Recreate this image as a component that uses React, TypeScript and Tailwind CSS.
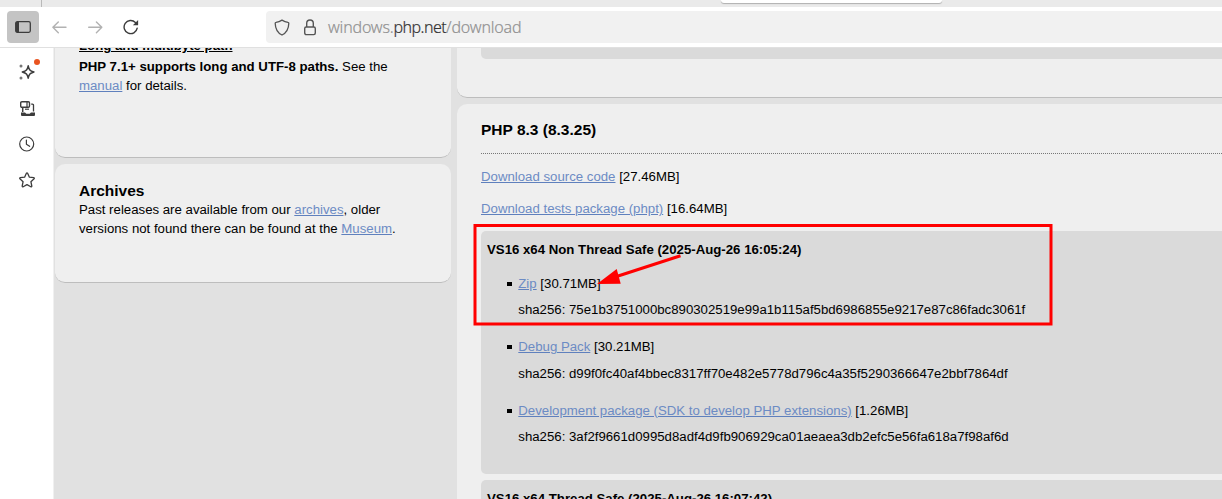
import React from "react";

function Link({ children }: { children: React.ReactNode }) {
  return (
    <a className="text-[#6c8bc4] underline decoration-[#5f80bd]">
      {children}
    </a>
  );
}

const packages = [
  {
    name: "Zip",
    size: "[30.71MB]",
    sha: "75e1b3751000bc890302519e99a1b115af5bd6986855e9217e87c86fadc3061f",
    row: "h-[63px]",
    hash: "mt-[6px]",
  },
  {
    name: "Debug Pack",
    size: "[30.21MB]",
    sha: "d99f0fc40af4bbec8317ff70e482e5778d796c4a35f5290366647e2bbf7864df",
    row: "h-[64px]",
    hash: "mt-[7px]",
  },
  {
    name: "Development package (SDK to develop PHP extensions)",
    size: "[1.26MB]",
    sha: "3af2f9661d0995d8adf4d9fb906929ca01aeaea3db2efc5e56fa618a7f98af6d",
    row: "h-[46px]",
    hash: "mt-[6px]",
  },
];

function TabStrip() {
  return (
    <div className="flex h-[7px] shrink-0 bg-[#eaeaea]">
      <div className="w-[42px] shrink-0 border-r border-[#b9b9b9]" />
      <div className="ml-[679px] h-[3px] w-[221px] rounded-b-[4px] bg-white shadow-[0_1px_1px_#b0b0b0]" />
    </div>
  );
}

function Toolbar() {
  return (
    <div className="flex h-[41px] shrink-0 border-b border-[#e0e0e0] bg-white pt-1 pl-[7px]">
      <div className="flex h-8 w-8 items-center justify-center rounded-[4px] bg-[#c4c4c4]">
        <svg width="16" height="12" viewBox="0 0 16 12" fill="none">
          <rect x="0.7" y="0.7" width="14.600" height="10.600" rx="1.500" stroke="#3c3c3c" strokeWidth="1.300" />
          <path d="M1 1h3v10H1z" fill="#3c3c3c" />
        </svg>
      </div>
      <svg className="mt-[9px] ml-[13px]" width="15" height="15" viewBox="0 0 15 15" fill="none" stroke="#b2b2b2" strokeWidth="1.4" strokeLinecap="round" strokeLinejoin="round">
        <path d="M14 7.3H1M6.3 1.9L.9 7.3l5.4 5.4" />
      </svg>
      <svg className="mt-[9px] ml-[21px]" width="15" height="15" viewBox="0 0 15 15" fill="none" stroke="#b2b2b2" strokeWidth="1.4" strokeLinecap="round" strokeLinejoin="round">
        <path d="M.7 7.3h13M8.4 1.9l5.4 5.4-5.4 5.4" />
      </svg>
      <svg className="mt-2 ml-[20px]" width="17" height="16" viewBox="0 0 17 16" fill="none">
        <path d="M14.2 9.2A6.600 6.600 0 1 1 12.400 3.400L13 4.200" stroke="#3c3c3c" strokeWidth="1.400" strokeLinecap="round" />
        <path d="M15.100 1v4.700a.5.5 0 0 1-.5.5H9.900z" fill="#3c3c3c" />
      </svg>
      <div className="ml-[126px] flex h-8 flex-1 items-center rounded-l-[4px] bg-[#f1f1f1] pl-2">
        <svg width="16" height="17" viewBox="0 0 16 17" fill="none" stroke="#555" strokeWidth="1.3" strokeLinejoin="round">
          <path d="M8 1.1c1.8 1.2 3.7 2 6 2.2.5 0 .8.4.8.9-.1 5.1-1.9 9.4-6.8 11.8C3.100 13.600 1.300 9.300 1.200 4.200c0-.5.300-.900.800-.900 2.300-.200 4.200-1 6-2.200z" />
        </svg>
        <svg className="ml-[14px]" width="12" height="17" viewBox="0 0 12 17" fill="none" stroke="#555" strokeWidth="1.4">
          <rect x=".7" y="8" width="10.6" height="7.6" rx="1.5" />
          <path d="M2.700 8V4.300a3.300 3.300 0 0 1 6.600 0V8" />
        </svg>
        <span className="-mt-px ml-3 font-['Noto_Sans','Open_Sans',sans-serif] text-[16px] font-light tracking-[-0.18px] whitespace-nowrap text-[#929292] [-webkit-text-stroke:0.2px]">
          windows.<span className="tracking-[-0.55px] text-[#333]">php.net</span>/download
        </span>
      </div>
    </div>
  );
}

function Sidebar() {
  return (
    <div className="flex w-[54px] shrink-0 flex-col border-r border-[#f0f0f0] bg-white">
      <div className="relative mt-4 ml-[19px] h-4 w-4">
        <svg width="16" height="16" viewBox="0 0 16 16" fill="none">
          <path d="M9.200 1.800c.900 4.100 1.700 4.900 5.700 6.200-4 1.300-4.800 2.100-5.700 6.200-.9-4.100-1.700-4.900-5.900-6.200 4.200-1.300 5-2.100 5.900-6.200z" stroke="#3c3c3c" strokeWidth="1.500" strokeLinejoin="round" />
          <circle cx="2" cy="2" r="1.500" fill="#777" />
          <circle cx="2" cy="14" r="1.500" fill="#777" />
        </svg>
        <div className="absolute -top-[5px] left-[15px] h-[6px] w-[6px] rounded-full bg-[#e95420]" />
      </div>
      <svg className="mt-[21px] ml-[20px]" width="16" height="15" viewBox="0 0 16 15" fill="none" stroke="#3c3c3c">
        <rect x=".700" y=".700" width="8.800" height="5.600" rx="1.200" strokeWidth="1.400" />
        <path d="M7 1v5" strokeWidth="1.200" />
        <path d="M11.200 3.200h1.300a1 1 0 0 1 1 1V10.500" strokeWidth="1.300" />
        <path d="M2.700 7v4" strokeWidth="1.500" />
        <path d="M5 8.200h4" strokeWidth="1.200" />
        <path d="M1 11.500h4l1.300 1.300h3.400L11 11.500h4V14a1 1 0 0 1-1 1H2a1 1 0 0 1-1-1z" fill="#3c3c3c" stroke="none" />
      </svg>
      <svg className="mt-[20px] ml-[19px]" width="16" height="16" viewBox="0 0 16 16" fill="none" stroke="#3c3c3c" strokeWidth="1.200" strokeLinecap="round" strokeLinejoin="round">
        <circle cx="7.700" cy="8" r="7" />
        <path d="M7.400 4v4.200l3.200 2.100" />
      </svg>
      <svg className="mt-5 ml-[19px]" width="16" height="16" viewBox="0 0 16 16" fill="none" stroke="#3c3c3c" strokeWidth="1.300" strokeLinejoin="round">
        <path d="M7.400 1.300a.7.700 0 0 1 1.200 0l1.800 3.900 4.300.5c.6.100.8.700.4 1.100l-3.200 2.900.9 4.300c.1.600-.5 1-1 .7L8 12.600l-3.800 2.100c-.5.300-1.100-.1-1-.7l.9-4.300L.9 6.800c-.4-.4-.2-1 .4-1.100l4.300-.5z" />
      </svg>
    </div>
  );
}

function LeftColumn() {
  return (
    <aside className="mr-[6px] ml-px flex w-[396px] shrink-0 flex-col gap-[6px]">
      <section className="h-[110px] shrink-0 overflow-hidden rounded-b-[10px] border-b border-[#bdbdbd] bg-[#efefef] pl-6">
        <div className="-mt-[12px] h-[21px] leading-[19px] font-bold underline">
          Long and multibyte path
        </div>
        <p className="w-[340px] leading-[19px]">
          <b>PHP 7.1+ supports long and UTF-8 paths.</b> See the
          <br />
          <Link>manual</Link> for details.
        </p>
      </section>
      <section className="h-[119px] shrink-0 rounded-[10px] border-b border-[#bdbdbd] bg-[#efefef] pt-[17px] pl-6">
        <h3 className="text-[15.5px] leading-[19px] font-bold">Archives</h3>
        <p className="leading-[19px]">
          Past releases are available from our <Link>archives</Link>, older
          <br />
          versions not found there can be found at the <Link>Museum</Link>.
        </p>
      </section>
    </aside>
  );
}

function Callout() {
  return (
    <svg className="absolute -top-[8px] -left-[8px]" width="581" height="104" viewBox="0 0 581 104" fill="none">
      <rect x="2" y="2.500" width="576" height="98.500" stroke="#f00" strokeWidth="3" />
      <path d="M207.500 32.700L142 54" stroke="#f00" strokeWidth="3" />
      <path d="M124 61l19.700-15 4 14.700z" fill="#f00" />
    </svg>
  );
}

function MainColumn() {
  return (
    <main className="flex min-w-0 flex-1 flex-col gap-[6px]">
      <section className="h-[50px] shrink-0 rounded-bl-[10px] border-b border-[#bdbdbd] bg-[#efefef] pl-6">
        <div className="h-[11px] rounded-bl-[5px] bg-[#dadada]" />
      </section>
      <section className="flex-1 rounded-tl-[10px] bg-[#efefef] pl-6">
        <h3 className="h-[49px] pt-4 text-[15.5px] leading-[20px] font-bold">PHP 8.3 (8.3.25)</h3>
        <div className="h-px bg-[repeating-linear-gradient(90deg,#777_0_1px,transparent_1px_2px)]" />
        <p className="mt-[13px] leading-[20px]">
          <Link>Download source code</Link> [27.46MB]
        </p>
        <p className="mt-3 leading-[20px]">
          <Link>Download tests package (phpt)</Link> [16.64MB]
        </p>
        <div className="relative mt-[12px] h-[243px] rounded-l-[5px] bg-[#dadada] pt-[9px] pl-[6px]">
          <h4 className="leading-[20px] font-bold">VS16 x64 Non Thread Safe (2025-Aug-26 16:05:24)</h4>
          <ul className="mt-[14px] pl-[20px]">
            {packages.map((p) => (
              <li key={p.name} className={`flex ${p.row}`}>
                <span className="mt-[8px] mr-[6px] h-[4px] w-[5px] shrink-0 bg-black" />
                <div className="pl-[0.3px]">
                  <p className="leading-[20px]">
                    <Link>{p.name}</Link> {p.size}
                  </p>
                  <p className={`leading-[20px] ${p.hash}`}>sha256: {p.sha}</p>
                </div>
              </li>
            ))}
          </ul>
          <Callout />
        </div>
        <div className="mt-[6px] h-[243px] rounded-l-[5px] bg-[#dadada] pt-[9px] pl-[6px]">
          <h4 className="leading-[20px] font-bold">VS16 x64 Thread Safe (2025-Aug-26 16:07:42)</h4>
        </div>
      </section>
    </main>
  );
}

export default function App() {
  return (
    <div className="flex h-[499px] w-[1222px] flex-col overflow-hidden bg-[#e1e1e1] font-['Liberation_Sans',Arial,sans-serif] text-[13.22px] whitespace-nowrap text-black">
      <TabStrip />
      <Toolbar />
      <div className="flex h-[451px] min-h-0 overflow-hidden">
        <Sidebar />
        <LeftColumn />
        <MainColumn />
      </div>
    </div>
  );
}
